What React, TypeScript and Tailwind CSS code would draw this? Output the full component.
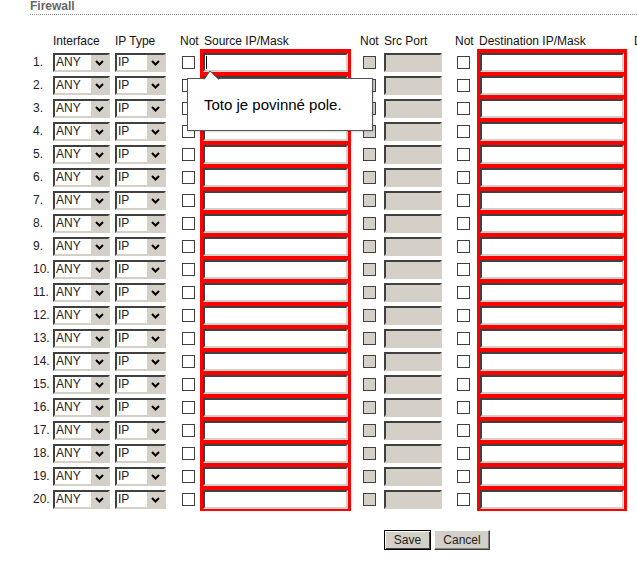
import React from "react";

const rows = Array.from({ length: 20 }, (_, i) => i + 1);

const Chevron = () => (
  <svg width="9" height="6" viewBox="0 0 9 6">
    <polyline points="1,1 4.5,4.5 8,1" fill="none" stroke="#000" strokeWidth="2" />
  </svg>
);

const Select: React.FC<{ value: string; width: string }> = ({ value, width }) => (
  <div
    className={`flex h-[19px] ${width} border-2 border-t-[#404040] border-l-[#404040] border-r-[#d4d0c8] border-b-[#d4d0c8] bg-white`}
  >
    <span className="flex-1 pl-[1px] text-[12px] leading-[15px] text-[#222]">{value}</span>
    <span className="flex h-full w-[17px] items-center justify-center bg-[#d4d0c8]">
      <Chevron />
    </span>
  </div>
);

const Checkbox: React.FC<{ disabled?: boolean }> = ({ disabled }) => (
  <div
    className={`h-[13px] w-[13px] border border-[#404040] ${disabled ? "bg-[#d4d0c8]" : "bg-white"}`}
  />
);

const TextField: React.FC<{ caret?: boolean }> = ({ caret }) => (
  <div className="relative h-[19px] w-full border-2 border-t-[#404040] border-l-[#404040] border-r-[#d4d0c8] border-b-[#d4d0c8] bg-white">
    {caret && <span className="absolute left-[1px] top-[1px] h-[13px] w-[1px] bg-black" />}
  </div>
);

const RequiredCell: React.FC<{ row: number; caret?: boolean; width: string }> = ({ row, caret, width }) => (
  <div
    className={`h-[23px] ${width} bg-[#ff0000] px-[3px] py-[2px] ${row === 1 ? "shadow-[0_-2px_0_#ff0000]" : ""}`}
  >
    <TextField caret={caret} />
  </div>
);

const header = "text-[12px] leading-[14px] text-[#111] whitespace-nowrap";

export default function App() {
  return (
    <div className="relative h-[577px] w-[637px] overflow-hidden bg-white font-['Liberation_Sans',Arial,sans-serif]">
      <div className="ml-[30px] border-b border-dotted border-[#888] pb-[1px] text-[12px] font-bold leading-[13px] text-[#666]">
        Firewall
      </div>

      <div className="mt-[19px] ml-[33px] grid grid-cols-[20px_62px_65px_20px_158px_26px_69px_24px_155px_60px]">
        <div className="h-[17px]" />
        <div className={header}>Interface</div>
        <div className={header}>IP Type</div>
        <div className={header}>Not</div>
        <div className={`${header} pl-[4px]`}>Source IP/Mask</div>
        <div className={`${header} pl-[2px]`}>Not</div>
        <div className={header}>Src Port</div>
        <div className={`${header} pl-[2px]`}>Not</div>
        <div className={`${header} pl-[2px]`}>Destination IP/Mask</div>
        <div className={`${header} pl-[2px]`}>Dst Port</div>

        {rows.map((n) => (
          <React.Fragment key={n}>
            <div className="h-[23px] text-[12px] leading-[23px] text-[#222]">{n}.</div>
            <div className="flex h-[23px] items-center">
              <Select value="ANY" width="w-[57px]" />
            </div>
            <div className="flex h-[23px] items-center">
              <Select value="IP" width="w-[51px]" />
            </div>
            <div className="flex h-[23px] items-center pl-[2px]">
              <Checkbox />
            </div>
            <RequiredCell row={n} caret={n === 1} width="w-[151px]" />
            <div className="flex h-[23px] items-center pl-[5px]">
              <Checkbox disabled />
            </div>
            <div className="flex h-[23px] items-center">
              <div className="h-[19px] w-[58px] border-2 border-t-[#404040] border-l-[#404040] border-r-[#d4d0c8] border-b-[#d4d0c8] bg-[#d4d0c8]" />
            </div>
            <div className="flex h-[23px] items-center pl-[4px]">
              <Checkbox />
            </div>
            <RequiredCell row={n} width="w-[150px]" />
            <div />
          </React.Fragment>
        ))}
      </div>

      <div className="mt-[19px] ml-[384px] flex gap-[3px]">
        <button className="h-[20px] w-[47px] border border-black bg-[#d4d0c8] text-[12px] leading-[16px] text-[#222] shadow-[inset_1px_1px_0_#fff,inset_-1px_-1px_0_#404040]">
          Save
        </button>
        <button className="h-[20px] w-[56px] border border-t-white border-l-white border-r-[#404040] border-b-[#404040] bg-[#d4d0c8] text-[12px] leading-[16px] text-[#222] shadow-[inset_-1px_-1px_0_#808080]">
          Cancel
        </button>
      </div>

      <div className="absolute left-[187px] top-[78px] h-[53px] w-[186px] border border-[#555] bg-white pl-[16px] pt-[17px] text-[15px] leading-[17px] text-black shadow-[1px_1px_2px_rgba(0,0,0,0.15)]">
        Toto je povinné pole.
      </div>
      <svg className="absolute left-[203px] top-[70px]" width="17" height="10" viewBox="0 0 17 10">
        <polygon points="1,10 7,1 16,10" fill="#fff" />
        <polyline points="1,9.5 7,1 16,9.5" fill="none" stroke="#555" strokeWidth="1" />
      </svg>
    </div>
  );
}
